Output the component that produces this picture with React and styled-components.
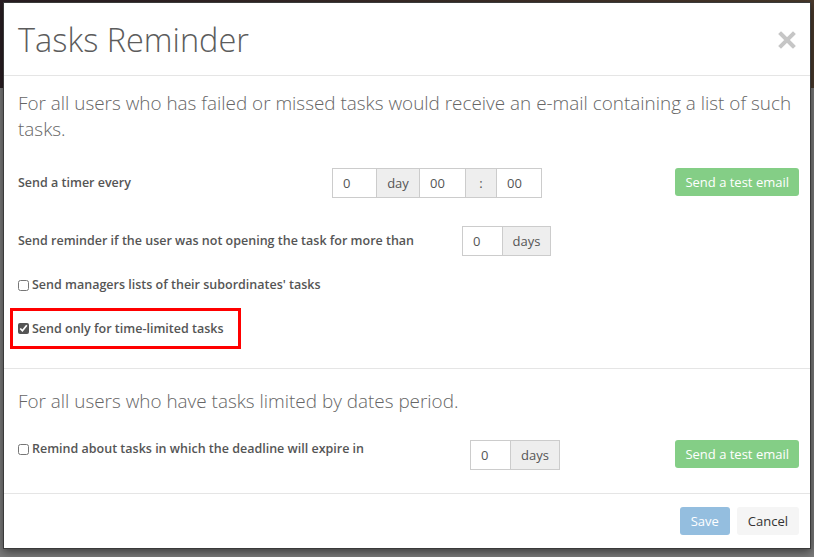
import styled, { createGlobalStyle } from "styled-components";

const GlobalStyle = createGlobalStyle`
  html, body {
    margin: 0;
    padding: 0;
  }
  body {
    font-family: "Open Sans", "Liberation Sans", sans-serif;
    background: #7b7b7b;
  }
`

const Backdrop = styled.div`
  min-height: 557px;
  box-sizing: border-box;
  padding: 2px 3px 8px 3px;
  background: linear-gradient(to right, #2b1f24, #4a3a2c) top / 100% 88px no-repeat, #7b7b7b;
`

const Modal = styled.div`
  background: #fff;
  border: 1px solid #3a3a3a;
  box-shadow: 0 3px 9px rgba(0, 0, 0, 0.5);
  display: flex;
  flex-direction: column;
`

const Header = styled.div`
  display: flex;
  justify-content: space-between;
  align-items: center;
  padding: 17px 14px 15px 14px;
  border-bottom: 1px solid #e5e5e5;
`

const Title = styled.h4`
  margin: 0;
  font-size: 32.5px;
  font-weight: 300;
  line-height: 40px;
  color: #5c5c5c;
`

const Close = styled.button`
  border: 0;
  background: none;
  padding: 0;
  width: 18px;
  height: 18px;
  display: flex;
  cursor: pointer;
`

const Section = styled.div`
  padding: ${(p) => p.$pad};
  border-bottom: 1px solid #e5e5e5;
  display: flex;
  flex-direction: column;
  align-items: flex-start;
`

const Intro = styled.p`
  margin: 0;
  font-size: 18.9px;
  font-weight: 300;
  line-height: 26px;
  color: #666;
`

const Row = styled.div`
  display: flex;
  align-items: ${(p) => p.$align || "center"};
  align-self: stretch;
  margin-top: ${(p) => p.$mt}px;
`

const Label = styled.label`
  width: ${(p) => (p.$w ? `${p.$w}px` : "auto")};
  flex-shrink: 0;
  display: flex;
  align-items: center;
  white-space: nowrap;
  font-size: 12.5px;
  font-weight: 600;
  line-height: 20px;
  color: #555;
  margin-top: ${(p) => p.$mt || 0}px;
`

const Check = styled.input`
  width: 11px;
  height: 11px;
  margin: 0 3px 0 0;
  accent-color: #555;
`

const Group = styled.div`
  display: flex;
  height: 30px;
`

const Field = styled.input`
  box-sizing: border-box;
  width: ${(p) => p.$w}px;
  height: 30px;
  border: 1px solid #ccc;
  padding: 0 10px;
  font-family: inherit;
  font-size: 13px;
  color: #555;
  outline: none;
  margin-left: -1px;
  &:first-child {
    margin-left: 0;
  }
`

const Addon = styled.span`
  box-sizing: border-box;
  width: ${(p) => p.$w}px;
  height: 30px;
  border: 1px solid #ccc;
  background: #eee;
  display: flex;
  align-items: center;
  justify-content: center;
  font-size: 13px;
  color: #555;
  margin-left: -1px;
`

const Spacer = styled.div`
  flex: 1;
`

const Button = styled.button`
  align-self: flex-start;
  height: 28px;
  padding: 0 ${(p) => p.$px || 10}px;
  border: 0;
  border-radius: 3px;
  font-family: inherit;
  font-size: 13px;
  background: ${(p) => p.$bg};
  color: ${(p) => p.$color || "#fff"};
  cursor: pointer;
`

const Highlight = styled.div`
  margin: 13px 0 0 -8px;
  width: 231px;
  height: 41px;
  box-sizing: border-box;
  border: 3px solid #f00;
  padding: 0 0 0 5px;
  display: flex;
  align-items: center;
`

const Footer = styled.div`
  display: flex;
  justify-content: flex-end;
  gap: 7px;
  padding: 13px 11px 13px 14px;
`

const CloseIcon = () => (
  <svg viewBox="0 0 18 18" width="18" height="18">
    <path d="M3 3 L15 15 M15 3 L3 15" stroke="#c6c6c6" strokeWidth="4" strokeLinecap="square" />
  </svg>
);

export default function App() {
  return (
    <Backdrop>
      <GlobalStyle />
      <Modal>
        <Header>
          <Title>Tasks Reminder</Title>
          <Close aria-label="Close">
            <CloseIcon />
          </Close>
        </Header>

        <Section $pad="14px 11px 19px 14px">
          <Intro>
            For all users who has failed or missed tasks would receive an e-mail containing a list of such tasks.
          </Intro>

          <Row $mt={26}>
            <Label $w={314}>Send a timer every</Label>
            <Group>
              <Field $w={45} defaultValue="0" />
              <Addon $w={44}>day</Addon>
              <Field $w={47} defaultValue="00" />
              <Addon $w={32}>:</Addon>
              <Field $w={46} defaultValue="00" />
            </Group>
            <Spacer />
            <Button $bg="#84ce86">Send a test email</Button>
          </Row>

          <Row $mt={28}>
            <Label $w={444}>Send reminder if the user was not opening the task for more than</Label>
            <Group>
              <Field $w={41} defaultValue="0" />
              <Addon $w={49}>days</Addon>
            </Group>
          </Row>

          <Row $mt={19}>
            <Label>
              <Check type="checkbox" />
              Send managers lists of their subordinates' tasks
            </Label>
          </Row>

          <Highlight>
            <Label>
              <Check type="checkbox" defaultChecked />
              Send only for time-limited tasks
            </Label>
          </Highlight>
        </Section>

        <Section $pad="19px 11px 23px 14px">
          <Intro>For all users who have tasks limited by dates period.</Intro>
          <Row $mt={26} $align="flex-start">
            <Label $w={452} $mt={-1}>
              <Check type="checkbox" />
              Remind about tasks in which the deadline will expire in
            </Label>
            <Group>
              <Field $w={41} defaultValue="0" />
              <Addon $w={50}>days</Addon>
            </Group>
            <Spacer />
            <Button $bg="#84ce86">Send a test email</Button>
          </Row>
        </Section>

        <Footer>
          <Button $bg="#94bedf" $px={11}>Save</Button>
          <Button $bg="#f5f5f5" $color="#333" $px={11}>Cancel</Button>
        </Footer>
      </Modal>
    </Backdrop>
  );
}
